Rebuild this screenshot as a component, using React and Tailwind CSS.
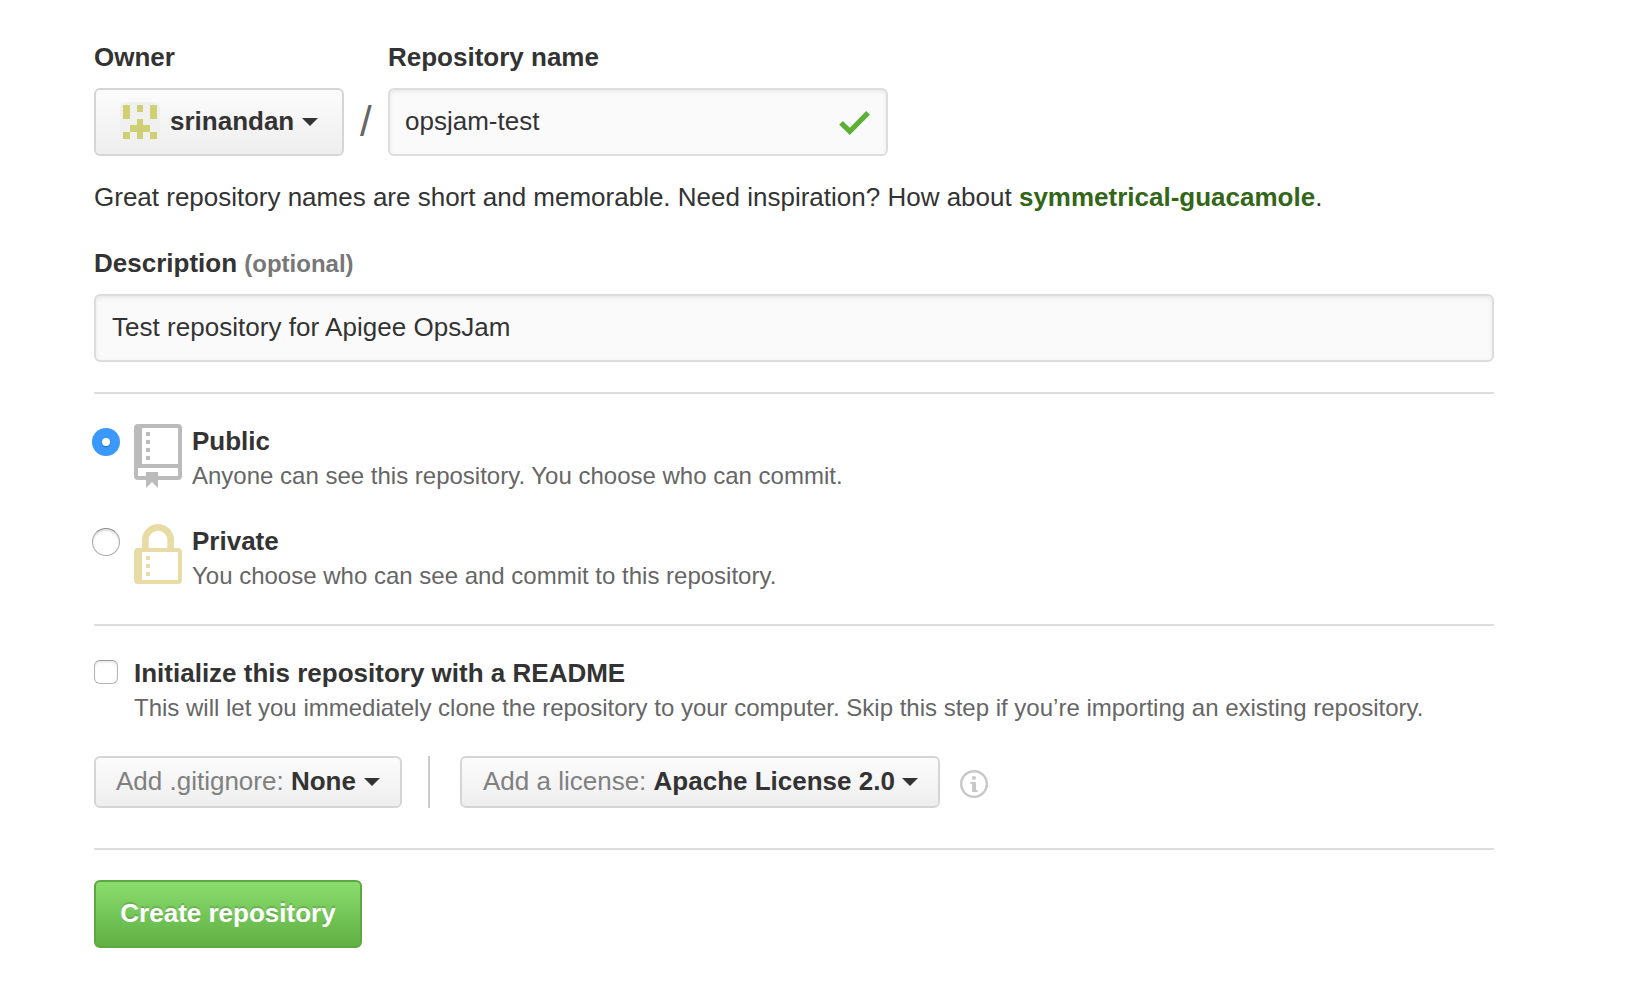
function Caret({ className = "" }) {
  return (
    <svg className={`h-2 w-4 shrink-0 ${className}`} viewBox="0 0 16 8" fill="#333">
      <path d="M0 0H16L8 8Z" />
    </svg>
  );
}

const AVATAR_CELLS = [
  [0, 0], [2, 0], [4, 0],
  [0, 1], [4, 1],
  [2, 2],
  [1, 3], [2, 3], [3, 3],
  [0, 4], [2, 4], [4, 4],
];

function Avatar() {
  return (
    <svg className="size-10 shrink-0" viewBox="0 0 40 40" shapeRendering="crispEdges">
      <rect width="40" height="40" rx="6" fill="#f0f0f0" shapeRendering="auto" />
      {AVATAR_CELLS.map(([x, y]) => (
        <rect key={`${x}-${y}`} x={3 + x * 6.8} y={3 + y * 6.8} width="6.8" height="6.8" fill="#cfcf74" />
      ))}
    </svg>
  );
}

function CheckIcon() {
  return (
    <svg className="mt-0.5 h-6 w-[31px]" viewBox="0 0 92 72" fill="#5bb035">
      <path d="M0 41L11 30L32 50L81 0L92 11L32 72Z" />
    </svg>
  );
}

function RepoIcon() {
  return (
    <svg className="h-16 w-12 shrink-0" viewBox="0 0 48 64" fill="#bbb">
      <path
        fillRule="evenodd"
        d="M4 0H44Q48 0 48 4V52Q48 56 44 56H24V64L18 58L12 64V56H4Q0 56 0 52V4Q0 0 4 0ZM8 4V40H44V4ZM4 44V52H12V48H24V52H44V44Z"
      />
      <path d="M12 8h4v4h-4zM12 16h4v4h-4zM12 24h4v4h-4zM12 32h4v4h-4z" />
    </svg>
  );
}

function LockIcon() {
  return (
    <svg className="h-[60px] w-12 shrink-0" viewBox="0 0 48 60" fill="#e9dba5">
      <path
        fillRule="evenodd"
        d="M8 24V16A16 16 0 0 1 40 16V24H44Q48 24 48 28V56Q48 60 44 60H4Q0 60 0 56V28Q0 24 4 24ZM14.7 24H33.3V16A9.3 9.3 0 0 0 14.7 16ZM8 28V56H44V28Z"
      />
      <path d="M12 32h4v4h-4zM12 40h4v4h-4zM12 48h4v4h-4z" />
    </svg>
  );
}

function InfoIcon() {
  return (
    <svg className="ml-5 size-7 shrink-0" viewBox="0 0 28 28" fill="#c8c8c8">
      <circle cx="14" cy="14" r="12.8" fill="none" stroke="#c8c8c8" strokeWidth="2.4" />
      <circle cx="14" cy="8" r="2" />
      <path d="M10.3 12H15Q16 12 16 13V20H17.7V22H13Q12 22 12 21V14H10.3Z" />
    </svg>
  );
}

function Divider({ className = "" }) {
  return <hr className={`h-0.5 border-0 bg-[#ddd] ${className}`} />;
}

function TextField({ label, className = "", children }) {
  return (
    <div
      role="textbox"
      aria-label={label}
      className={`flex h-[68px] items-center rounded-[6px] border-2 border-[#ddd] bg-[#fafafa] shadow-[inset_0_2px_4px_rgba(0,0,0,0.075)] ${className}`}
    >
      {children}
    </div>
  );
}

const GRAY_BUTTON =
  "flex items-center rounded-[6px] border-2 border-[#d5d5d5] bg-linear-to-b from-[#fcfcfc] to-[#eee] whitespace-nowrap";

function VisibilityOption({ title, note, checked, icon, className = "" }) {
  return (
    <label className={`flex h-16 ${className}`}>
      {checked ? (
        <span className="mt-1 -ml-0.5 flex size-7 items-center justify-center rounded-full bg-[#3b99fc]">
          <span className="size-2 rounded-full bg-white shadow-[0_1px_2px_rgba(0,0,0,0.3)]" />
        </span>
      ) : (
        <span className="mt-1 -ml-0.5 size-7 rounded-full border border-[#aaa] border-t-[#8c8c8c] bg-white shadow-[inset_0_2px_2px_rgba(0,0,0,0.12)]" />
      )}
      <span className="ml-3.5">{icon}</span>
      <span className="ml-2.5 flex flex-col whitespace-nowrap">
        <span className="mt-0.5 leading-[30px] font-bold">{title}</span>
        <span className="mt-[5px] text-2xl leading-[30px] text-[#666]">{note}</span>
      </span>
    </label>
  );
}

export default function App() {
  return (
    <main className="h-[1000px] w-[1634px] overflow-hidden bg-white pt-[42px] pl-[94px] font-['Liberation_Sans',Arial,sans-serif] text-[26px] leading-[30px] text-[#333]">
      <form className="flex w-[1400px] flex-col">
        <div className="flex">
          <div className="w-[250px]">
            <div className="font-bold">Owner</div>
            <button type="button" className={`${GRAY_BUTTON} mt-4 h-[68px] w-[250px] pl-6`}>
              <Avatar />
              <b className="ml-2.5 -mt-0.5">srinandan</b>
              <Caret className="ml-2" />
            </button>
          </div>
          <div className="w-11 pt-[46px] pl-4 text-[42px] leading-[68px] text-[#666]">/</div>
          <div className="w-[500px]">
            <div className="font-bold">Repository name</div>
            <TextField label="Repository name" className="mt-4 justify-between pr-4 pl-[15px]">
              <span className="-mt-0.5">opsjam-test</span>
              <CheckIcon />
            </TextField>
          </div>
        </div>

        <p className="mt-[26px] whitespace-nowrap">
          Great repository names are short and memorable. Need inspiration? How about{" "}
          <b className="text-[#336618]">symmetrical-guacamole</b>.
        </p>

        <div className="mt-9 font-bold">
          Description <span className="text-2xl leading-none text-[#777]">(optional)</span>
        </div>
        <TextField label="Description" className="mt-4 px-4">
          <span className="-mt-0.5 tracking-[0.03px]">Test repository for Apigee OpsJam</span>
        </TextField>

        <Divider className="mt-[30px]" />

        <VisibilityOption
          checked
          className="mt-[30px]"
          icon={<RepoIcon />}
          title="Public"
          note="Anyone can see this repository. You choose who can commit."
        />
        <VisibilityOption
          className="mt-9"
          icon={<LockIcon />}
          title="Private"
          note="You choose who can see and commit to this repository."
        />

        <Divider className="mt-9" />

        <label className="mt-8 flex h-[68px]">
          <span className="mt-0.5 size-6 rounded-[6px] border border-[#b4b4b4] border-t-[#999] bg-white shadow-[inset_0_2px_2px_rgba(0,0,0,0.08)]" />
          <span className="ml-4 flex flex-col whitespace-nowrap">
            <b>Initialize this repository with a README</b>
            <span className="mt-[5px] text-2xl leading-[30px] text-[#666]">
              This will let you immediately clone the repository to your computer. Skip this step if you’re importing an
              existing repository.
            </span>
          </span>
        </label>

        <div className="mt-[30px] flex h-[52px] items-center">
          <button type="button" className={`${GRAY_BUTTON} h-[52px] w-[308px] pl-5`}>
            <span className="-mt-0.5 text-[#808080]">
              Add .gitignore: <b className="text-[#333]">None</b>
            </span>
            <Caret className="ml-2" />
          </button>
          <span className="ml-[26px] h-[52px] w-0.5 bg-[#ccc]" />
          <button type="button" className={`${GRAY_BUTTON} ml-[30px] h-[52px] w-[480px] pl-[21px]`}>
            <span className="-mt-0.5 text-[#808080]">
              Add a license: <b className="text-[#333]">Apache License 2.0</b>
            </span>
            <Caret className="ml-[7px]" />
          </button>
          <span className="mt-1">
            <InfoIcon />
          </span>
        </div>

        <Divider className="mt-10" />

        <button
          type="button"
          className="mt-[30px] flex h-[68px] w-[268px] items-center justify-center rounded-[6px] border-2 border-[#5ca941] bg-linear-to-b from-[#8add6d] to-[#60b044] pb-0.5 font-bold whitespace-nowrap text-white [text-shadow:0_-2px_0_rgba(0,0,0,0.15)]"
        >
          Create repository
        </button>
      </form>
    </main>
  );
}
